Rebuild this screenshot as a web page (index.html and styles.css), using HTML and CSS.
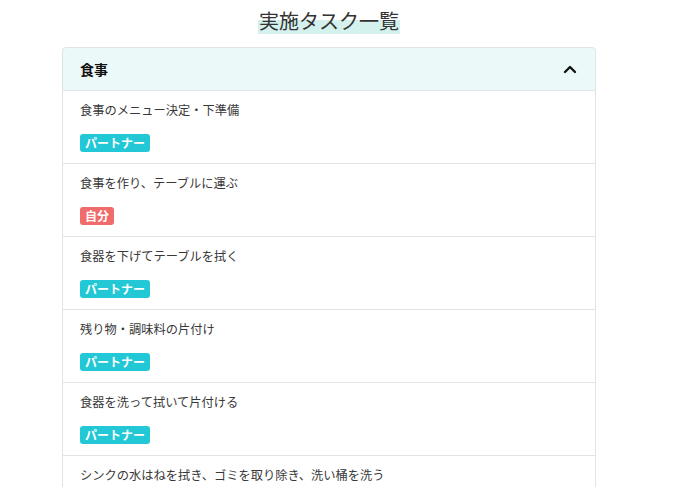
FILE: index.html
```html
<!DOCTYPE html>
<html lang="ja">
<head>
<meta charset="utf-8">
<link rel="stylesheet" href="styles.css">
</head>
<body>
<div class="page">
  <div class="title-wrap"><h1 class="title">実施タスク一覧</h1></div>
  <div class="card">
    <div class="card-header">
      <span class="cat">食事</span>
      <svg class="chev" width="14" height="10" viewBox="0 0 14 10"><polyline points="2,8 7,3 12,8" fill="none" stroke="#111" stroke-width="2.4" stroke-linecap="round" stroke-linejoin="round"/></svg>
    </div>
    <div class="row"><div class="task">食事のメニュー決定・下準備</div><span class="badge partner">パートナー</span></div>
    <div class="row"><div class="task">食事を作り、テーブルに運ぶ</div><span class="badge self">自分</span></div>
    <div class="row"><div class="task">食器を下げてテーブルを拭く</div><span class="badge partner">パートナー</span></div>
    <div class="row"><div class="task">残り物・調味料の片付け</div><span class="badge partner">パートナー</span></div>
    <div class="row"><div class="task">食器を洗って拭いて片付ける</div><span class="badge partner">パートナー</span></div>
    <div class="row"><div class="task">シンクの水はねを拭き、ゴミを取り除き、洗い桶を洗う</div><span class="badge partner">パートナー</span></div>
  </div>
</div>
</body>
</html>
```

FILE: styles.css
```css
html, body {
  margin: 0;
  padding: 0;
  background: #fff;
  overflow: hidden;
}
body {
  font-family: "Noto Sans CJK JP", "Noto Sans", sans-serif;
  color: #333;
}
.page {
  width: 658px;
}
.title-wrap {
  text-align: center;
  padding-top: 8px;
  height: 47px;
  box-sizing: border-box;
}
.title {
  display: inline-block;
  margin: 0;
  font-size: 20px;
  font-weight: 400;
  line-height: 26px;
  color: #333;
  padding: 0 1px;
  background: linear-gradient(transparent 48%, #d4f1ee 48%);
}
.card {
  width: 534px;
  margin: 0 auto;
}
.card-header {
  height: 44px;
  box-sizing: border-box;
  border: 1px solid #dfe5e5;
  border-radius: 4px 4px 0 0;
  background: #ecf9f9;
  display: flex;
  align-items: center;
  justify-content: space-between;
  padding: 0 18px 0 17px;
}
.cat {
  font-size: 14px;
  font-weight: 700;
  color: #111;
}
.chev {
  display: block;
}
.row {
  border: 1px solid #e3e3e3;
  border-top: none;
  padding: 9px 17px 11px;
  display: flex;
  flex-direction: column;
  align-items: flex-start;
}
.task {
  font-size: 12.25px;
  line-height: 20px;
  color: #383838;
  margin-bottom: 14px;
}
.badge {
  display: inline-block;
  height: 18px;
  line-height: 18px;
  padding: 0 5px;
  border-radius: 3px;
  color: #fff;
  font-size: 12px;
  font-weight: 700;
}
.partner {
  background: #22c8d5;
}
.self {
  background: #f26b6b;
}
```
